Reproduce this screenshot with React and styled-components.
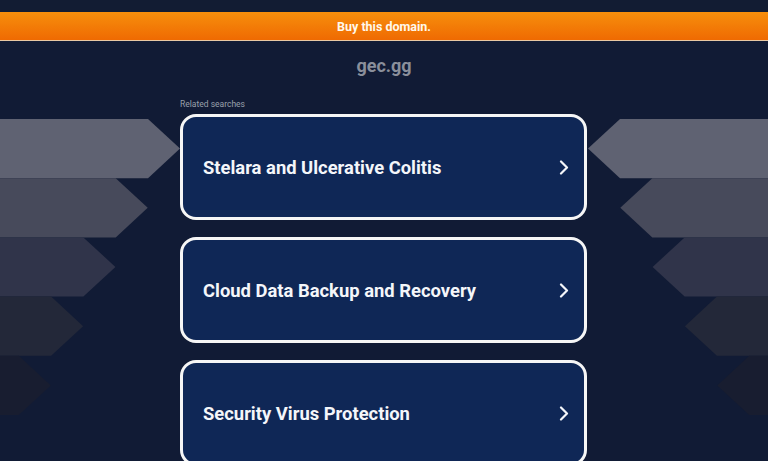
import React from 'react'
import styled, { createGlobalStyle } from 'styled-components'

const GlobalStyle = createGlobalStyle`
  html, body {
    margin: 0;
    padding: 0;
    background: #111b35;
  }
  body {
    font-family: Roboto, "Liberation Sans", Arial, sans-serif;
  }
`

const Page = styled.div`
  width: 768px;
  height: 461px;
  overflow: hidden;
  background: #111b35;
`

const TopStrip = styled.div`
  height: 12px;
  background: #121c33;
`

const BuyBar = styled.a`
  display: flex;
  align-items: center;
  justify-content: center;
  height: 28px;
  background: linear-gradient(#f78f0c, #ef6a02);
  border-bottom: 1px solid #e9c9a4;
  color: #fff8ec;
  font-size: 12.5px;
  font-weight: 700;
  text-decoration: none;
`

const DomainTitle = styled.h1`
  margin: 13px 0 0;
  font-size: 18px;
  line-height: 24px;
  font-weight: 700;
  text-align: center;
  color: #8a8f9b;
`

const Body = styled.div`
  display: grid;
  grid-template-columns: 180px 407px 1fr;
  grid-template-areas:
    ". label ."
    "left cards right";
  margin-top: 21px;
`

const Label = styled.div`
  grid-area: label;
  font-size: 8.5px;
  line-height: 10px;
  color: #9aa0ab;
  margin-bottom: 5px;
`

const Cards = styled.div`
  grid-area: cards;
  display: flex;
  flex-direction: column;
  gap: 17px;
`

const Card = styled.a`
  box-sizing: border-box;
  flex-shrink: 0;
  height: 106px;
  display: flex;
  align-items: center;
  justify-content: space-between;
  padding: 0 15px 0 20px;
  border: 3px solid #f6f6f6;
  border-radius: 16px;
  background: #0f2756;
  color: #f4f6fa;
  font-size: 18.4px;
  font-weight: 700;
  text-decoration: none;
`

const Side = styled.svg`
  grid-area: ${p => p.$area};
  justify-self: ${p => (p.$area === 'right' ? 'end' : 'start')};
  transform: ${p => (p.$area === 'right' ? 'scaleX(-1)' : 'none')};
  display: block;
`

const bands = ['#5f6272', '#474a5b', '#30344a', '#232839', '#181d30']

const Arrows = ({ area }) => (
  <Side $area={area} width="180" height="347" viewBox="0 0 180 347">
    {bands.map((c, i) => {
      const top = 5 + i * 59.2
      const bottom = top + 59.2
      const edge = 148 - i * 32.3
      const tip = 180 - i * 32.3
      return (
        <polygon
          key={c}
          fill={c}
          points={`0,${top} ${edge},${top} ${tip},${(top + bottom) / 2} ${edge},${bottom} 0,${bottom}`}
        />
      )
    })}
  </Side>
)

const Chevron = () => (
  <svg width="10" height="15" viewBox="0 0 10 15">
    <path d="M2 1.5 L8 7.5 L2 13.5" fill="none" stroke="#f4f6fa" strokeWidth="2.2" strokeLinecap="round" strokeLinejoin="round" />
  </svg>
)

const searches = [
  'Stelara and Ulcerative Colitis',
  'Cloud Data Backup and Recovery',
  'Security Virus Protection',
]

export default function App() {
  return (
    <Page>
      <GlobalStyle />
      <TopStrip />
      <BuyBar href="#">Buy this domain.</BuyBar>
      <DomainTitle>gec.gg</DomainTitle>
      <Body>
        <Label>Related searches</Label>
        <Arrows area="left" />
        <Cards>
          {searches.map(s => (
            <Card key={s} href="#">
              {s}
              <Chevron />
            </Card>
          ))}
        </Cards>
        <Arrows area="right" />
      </Body>
    </Page>
  )
}
